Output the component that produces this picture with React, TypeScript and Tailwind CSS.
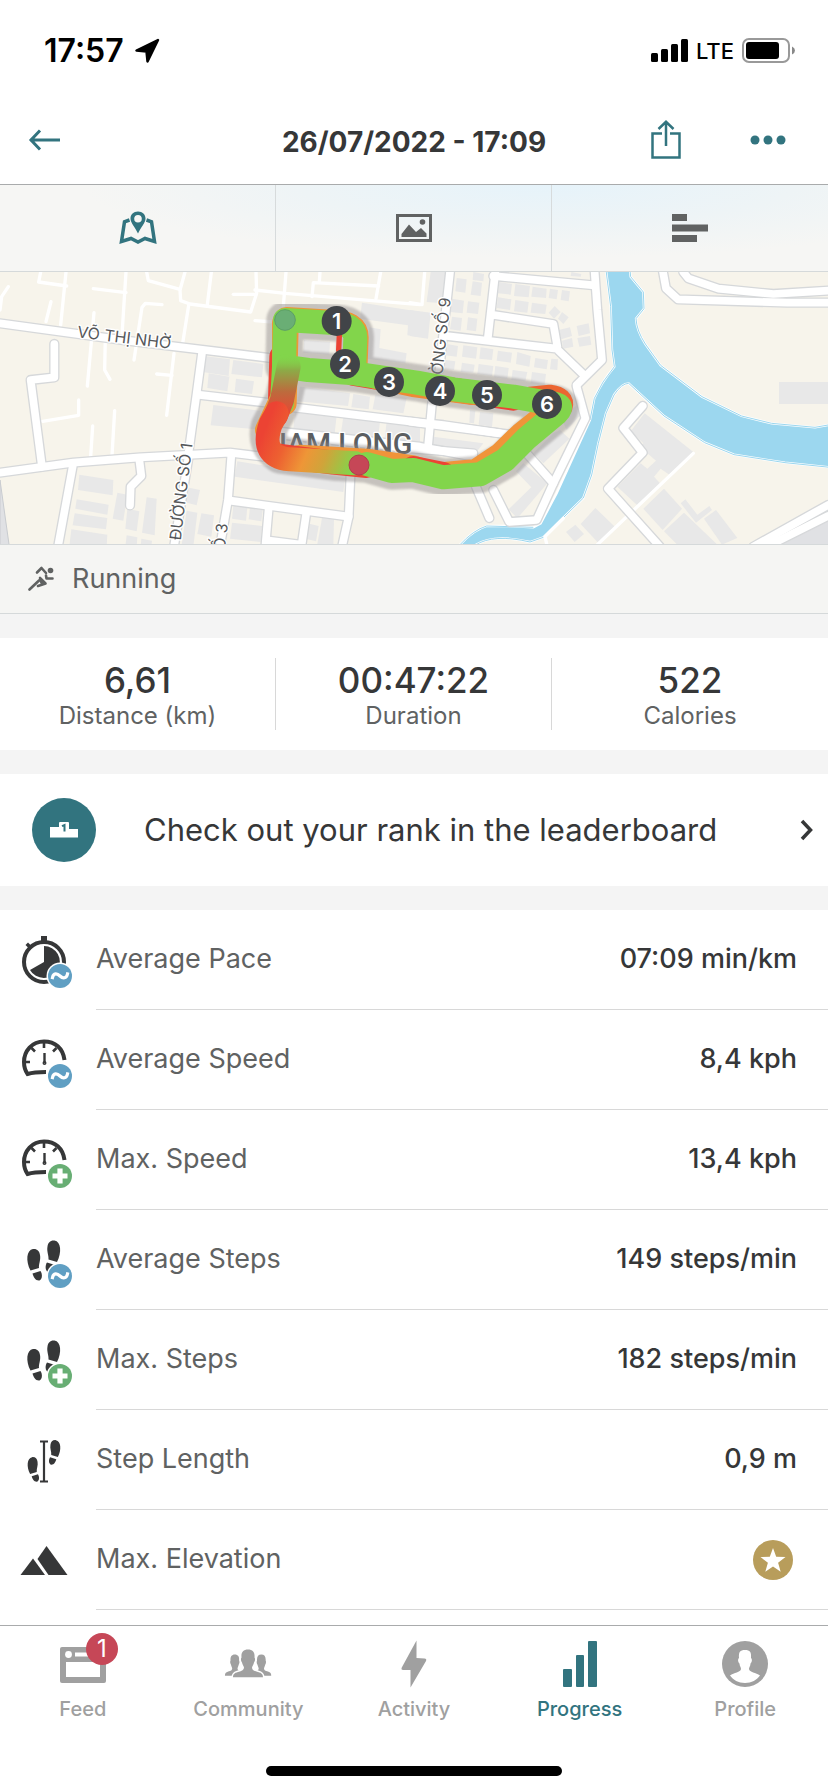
import type { ReactNode } from 'react';

interface Metric {
  label: string;
  value?: string;
  icon: ReactNode;
}

// ---------- MAP DATA (three units per pixel) ----------

const minorRoads = [
  'M25 50 L5 80 L0 120', 'M122 6 L116 36 L200 48', 'M198 6 L182 165', 'M153 95 L138 155',
  'M378 6 L366 195', 'M280 56 L378 68', 'M440 6 L445 32 L540 58', 'M555 6 L540 60 L542 92 L570 102 L752 126 L770 70 L768 6',
  'M634 6 L622 104', 'M700 73 L768 73', 'M566 106 L548 220', 'M765 60 L856 70 L1260 104', 'M858 6 L850 110',
  'M960 6 L958 36', 'M1142 6 L1128 86', 'M936 80 L940 38 L1136 48', 'M486 104 L436 100 L426 112 L402 270',
  'M282 128 L262 348', 'M316 200 L314 300 L330 328', 'M522 250 L500 436', 'M470 312 L516 316',
  'M236 390 L236 436 L128 454', 'M344 422 L336 556', 'M278 468 L272 560', 'M765 152 L820 156',
];

const roads = [
  'M0 160 L380 212 L820 265', 'M606 250 L590 370 L566 545', 'M592 374 L800 398', 'M880 412 L1260 458 L1330 465 L1500 490',
  'M163 222 L163 322 L92 330 L126 590', 'M0 608 L220 578 L420 562 L690 548 L790 560', 'M218 590 L174 830',
  'M418 570 L424 618 L392 650 L390 706', 'M566 560 L522 830', 'M694 556 L684 690 L660 830', 'M690 692 L1046 740',
  'M1054 560 L1046 740 L1026 830', 'M806 715 L796 830', 'M918 735 L904 830', 'M806 812 L900 824', 'M850 486 L1260 530 L1420 560',
];

const rightRoads = [
  'M120 6 L88 300', 'M256 6 L234 200', 'M250 18 L554 46', 'M554 6 L562 120 L576 270 L500 345',
  'M110 198 L440 236 L525 318', 'M246 134 L430 162 L442 230', 'M66 400 L54 530', 'M0 455 L310 495', 'M-380 495 L0 535 L190 550',
  'M500 350 L526 445 L430 640 L380 750 L298 756 L250 660', 'M198 650 L238 744', 'M350 550 L430 640',
  'M698 408 L640 474 L698 548 L594 656 L750 830', 'M758 0 L768 55 L804 88 L1130 98 L1254 98',
  'M820 6 L835 25 L925 56 L1090 72 L1254 62', 'M1030 830 L1254 705', 'M1070 830 L1254 738',
];

const buildings = [
  '612,258 690,268 686,318 608,306', '700,270 790,282 786,322 694,312', '626,310 688,320 682,364 622,354', '708,326 762,334 756,372 704,366',
  '640,405 780,422 790,480 632,466', '712,574 1036,624 1030,666 704,620', '238,614 340,630 338,676 234,660', '230,688 326,704 322,734 226,716',
  '224,730 322,744 318,778 218,766', '214,778 322,794 320,830 208,830', '352,668 382,674 370,752 338,746', '382,716 418,724 410,784 376,776',
  '440,682 470,686 464,796 426,788', '380,796 412,802 410,830 376,830', '424,806 456,812 454,830 422,830', '560,652 600,660 590,706 552,696',
  '560,722 592,728 580,830 544,830', '604,730 642,736 634,800 592,792', '700,706 742,712 738,752 696,746', '750,712 788,720 784,754 746,748',
  '696,758 786,768 782,816 690,806', '922,760 956,768 948,814 916,806', '966,744 1002,748 1000,826 952,822',
  '1086,98 1260,125 1260,202 1222,196 1224,166 1080,146', '1108,172 1142,178 1138,234 1220,250 1216,280 1100,266',
  '912,210 990,216 988,254 910,248', '900,350 1050,370 1044,408 892,394', '1060,372 1110,380 1106,418 1054,412',
  '1126,374 1220,384 1210,430 1118,418', '886,420 1010,436 1004,490 880,476', '1030,440 1140,454 1134,508 1022,496', '1160,456 1260,468 1260,520 1154,508',
];

const rightBuildings = [
  '62,6 108,6 98,100 50,96', '0,120 62,128 54,206 0,198', '140,24 170,28 166,68 136,64', '188,34 216,38 212,78 182,74', '190,6 222,12 220,34 188,30',
  '126,86 162,92 158,130 120,126', '174,94 208,98 204,132 170,128', '126,140 156,144 152,182 120,178', '174,142 202,146 198,184 170,180',
  '268,36 306,42 302,74 264,70', '316,42 360,48 356,82 312,78', '368,50 410,56 408,84 364,80', '420,56 444,60 440,88 416,84', '456,60 480,64 476,94 452,90',
  '264,82 304,88 300,120 260,114', '316,90 356,96 352,128 312,124', '366,98 410,104 406,132 362,128', '434,108 452,126 432,146 416,128', '456,126 476,142 460,162 444,146',
  '446,180 480,172 486,198 454,208', '500,168 536,160 540,190 506,198', '456,212 486,204 490,230 460,236', '502,204 540,198 544,224 508,230', '484,6 514,12 512,20 482,18',
  '110,222 144,228 140,260 106,256', '160,226 202,232 198,266 156,260', '212,232 250,238 246,270 208,266', '264,242 306,248 302,278 260,272', '322,246 362,258 358,290 318,282',
  '376,264 414,270 410,298 372,292', '424,266 444,268 442,300 420,298', '106,270 136,274 132,300 104,298', '156,278 194,284 190,308 152,306', '206,282 250,288 246,318 202,312',
  '256,288 296,294 292,326 252,322', '308,300 352,306 346,334 304,330', '366,306 408,312 404,344 362,340',
  '0,470 26,474 22,510 0,508', '70,500 220,520 200,545 66,532', '180,420 196,422 192,460 178,458', '210,426 250,430 246,470 206,464',
  '370,550 430,490 450,480 478,506 400,580', '318,604 340,580 412,640 322,745 296,718 364,652', '452,440 510,400 516,430 470,480',
  '704,430 850,546 778,614 752,596 732,620 750,640 682,706 622,650 692,580 712,596 738,572 690,530 700,520 662,484',
  '762,656 816,716 758,780 700,716', '822,728 920,822 800,822 762,784', '826,688 862,734 898,708 906,720 858,758 812,700',
  '918,720 982,804 936,824 882,746', '556,714 616,772 568,822 512,762', '496,764 522,792 494,816 468,786', '1107,336 1260,336 1260,402 1107,402',
];

const loop = 'M855 150 L990 158 Q1066 158 1066 205 L1062 305';
const outbound = 'M855 160 L852 290 L925 300 L1062 310 L1250 338 L1360 358 L1540 380 L1640 398';
const turn = 'M1640 398 Q1700 400 1670 430 L1580 505 L1515 570 L1440 613 L1330 622 L1240 600 L1175 603 L1100 582';
const home = 'M872 290 L850 390 L808 470 Q794 520 840 555 L1000 576 L1100 582';

const markers = [
  { n: 1, x: 1010, y: 153 },
  { n: 2, x: 1035, y: 282 },
  { n: 3, x: 1167, y: 336 },
  { n: 4, x: 1320, y: 363 },
  { n: 5, x: 1461, y: 375 },
  { n: 6, x: 1641, y: 402 },
];

function RouteMap() {
  return (
    <svg
      viewBox="0 6 2484 816"
      preserveAspectRatio="xMidYMid slice"
      role="img"
      aria-label="Route map"
      className="block w-full h-[272px] bg-[#f7f4eb] font-[Inter,sans-serif]"
    >
      <defs>
        <linearGradient id="fade" gradientUnits="userSpaceOnUse" x1="0" y1="255" x2="0" y2="440">
          <stop offset="0" stopColor="#82d54b" stopOpacity="0" />
          <stop offset="0.25" stopColor="#8daa47" />
          <stop offset="0.6" stopColor="#bd6a3d" />
          <stop offset="1" stopColor="#ec4333" />
        </linearGradient>
        <linearGradient id="heat" gradientUnits="userSpaceOnUse" x1="810" y1="440" x2="1075" y2="550">
          <stop offset="0" stopColor="#ec4333" />
          <stop offset="0.25" stopColor="#ed6131" />
          <stop offset="0.5" stopColor="#ee9637" />
          <stop offset="0.7" stopColor="#d0a43a" />
          <stop offset="1" stopColor="#82d54b" />
        </linearGradient>
        <filter id="soft" x="-10%" y="-10%" width="120%" height="120%">
          <feGaussianBlur stdDeviation="3" />
        </filter>
      </defs>

      <path d="M0 630 L28 830 L0 830z" fill="#e0e1e4" stroke="#c9ccd0" strokeWidth="3" />
      <g fill="#e8e8e8">
        {buildings.map(p => <polygon key={p} points={p} />)}
        <g transform="translate(1230 0)">
          {rightBuildings.map(p => <polygon key={p} points={p} />)}
          <path d="M1090 830 L1254 745 L1254 830z" fill="#e0e1e4" />
        </g>
      </g>

      {/* River */}
      <g transform="translate(1230 0)">
        <path
          d="M588 0 L602 110 L606 240 L613 290 Q575 335 553 385 L540 450 L440 670 L392 760 L370 772 L290 768 L230 768 Q190 780 148 826 L195 826 Q250 790 360 816 L400 802 L520 684 L545 615 L565 520 L588 430 L612 375 Q635 340 656 340 L762 438 L884 518 L972 554 L1125 578 L1260 592 L1260 464 L1215 472 L1085 460 L995 438 L876 380 L752 286 L706 222 Q680 182 678 146 L702 116 L700 66 L662 20 L660 0z"
          fill="#9cd7ef"
          stroke="#fff"
          strokeWidth="7"
        />
        <path
          d="M588 0 L602 110 L606 240 L613 290 Q575 335 553 385 L540 450 M148 826 Q190 780 230 768 L370 772 M195 826 Q250 790 360 816 L400 802 L520 684 L545 615 L565 520 L588 430 L612 375 Q635 340 656 340 L762 438 L884 518 L972 554 L1125 578 L1260 592 M1260 464 L1215 472 L1085 460 L995 438 L876 380 L752 286 L706 222 Q680 182 678 146 L702 116 L700 66 L662 20 L660 0"
          fill="none"
          stroke="#9cd7ef"
          strokeWidth="3"
        />
      </g>

      {/* Streets, drawn as a grey casing with a white core */}
      <g fill="none" strokeLinecap="round" strokeLinejoin="round">
        <g stroke="#fff" strokeWidth="10">
          {minorRoads.map(d => <path key={d} d={d} />)}
          <path d="M2080 550 L1790 826 M1642 830 L1635 800 L1690 745 M1230 98 L1266 104 L1274 6" />
        </g>
        <g stroke="#d6d8da" strokeWidth="31">
          {roads.map(d => <path key={d} d={d} />)}
          <g transform="translate(1230 0)">{rightRoads.map(d => <path key={d} d={d} />)}</g>
        </g>
        <g stroke="#fff" strokeWidth="23">
          {roads.map(d => <path key={d} d={d} />)}
          <g transform="translate(1230 0)">{rightRoads.map(d => <path key={d} d={d} />)}</g>
        </g>
      </g>

      {/* Street names */}
      <g fill="#55575a" stroke="#fff" strokeWidth="8" strokeLinejoin="round" paintOrder="stroke" fontSize="48">
        <text transform="translate(230 202) rotate(7)">VÕ THỊ NHỜ</text>
        <text transform="translate(542 812) rotate(-83)">ĐƯỜNG SỐ 1</text>
        <text transform="translate(684 762) rotate(-83)" textAnchor="end">SỐ 3</text>
        <text transform="translate(1352 84) rotate(-84)" textAnchor="end">ĐƯỜNG SỐ 9</text>
        <text x="1237" y="552" textAnchor="end" fontSize="86" fontWeight="500" fill="#5b5e61" className="font-[Roboto,sans-serif]">
          NAM LONG
        </text>
      </g>

      {/* Route */}
      <g fill="none" strokeLinecap="round" strokeLinejoin="round">
        <g stroke="#8b8686" strokeWidth="112" opacity="0.45" filter="url(#soft)">
          <path d={`${loop} ${outbound} ${turn} ${home}`} />
        </g>
        <g strokeWidth="72">
          <path d={loop} stroke="#ee9637" transform="translate(4 -3)" />
          <path d="M850 260 L846 390" stroke="#ec4333" transform="translate(-6 0)" />
          <path d="M852 160 L852 300" stroke="#ee9637" />
          <path d="M860 170 L854 400" stroke="#ee9637" />
          <path d="M1062 312 L1250 343 L1540 386" stroke="#ec4333" />
          <path d="M1130 322 L1240 345 L1420 369" stroke="#ee8a35" />
          <path d="M1590 386 L1650 380 Q1690 385 1682 410" stroke="#ec6631" />
          <path d="M1655 420 L1565 492 L1500 555 L1428 603 L1310 614 L1240 592 L1100 572 L900 560" stroke="#f0943a" />
          <path d="M1330 620 L1240 602" stroke="#ec4333" transform="translate(0 -8)" />
          <path d="M830 556 L1000 578 L1100 588" stroke="#ec4333" />
          <path d="M848 390 L806 480" stroke="#ee9637" transform="translate(-5 0)" />
        </g>
        <g stroke="#82d54b" strokeWidth="72">
          <path d={loop} />
          <path d={outbound} />
          <path d={turn} />
          <path d="M852 290 L846 400" />
        </g>
        <path d="M1018 196 L1016 240" stroke="#ec4333" strokeWidth="16" />
        <path d="M866 290 L846 390 L828 436" stroke="url(#fade)" strokeWidth="72" />
        <path d="M830 430 L812 462 Q778 560 870 568 L1065 580" stroke="url(#heat)" strokeWidth="72" />
      </g>

      <circle cx="855" cy="150" r="31" fill="#6aae75" stroke="#5c9d68" strokeWidth="3" />
      <circle cx="1077" cy="585" r="30" fill="#c64757" stroke="#b03e4c" strokeWidth="3" />
      {markers.map(m => (
        <g key={m.n}>
          <circle cx={m.x} cy={m.y} r="45" fill="#414448" />
          <text x={m.x} y={m.y + 24} textAnchor="middle" fontSize="66" fontWeight="600" fill="#fff">
            {m.n}
          </text>
        </g>
      ))}
    </svg>
  );
}

// ---------- METRIC ICONS ----------

function AvgBadge() {
  return (
    <g>
      <circle cx="38" cy="40" r="13.5" fill="#fff" />
      <circle cx="38" cy="40" r="12" fill="#609fc3" />
      <path d="M30.5 41.5 C31.5 37 35 37 38 40 C41 43 44.5 42.5 45.5 38" fill="none" stroke="#fff" strokeWidth="3.2" strokeLinecap="square" />
    </g>
  );
}

function MaxBadge() {
  return (
    <g>
      <circle cx="38" cy="40" r="13.5" fill="#fff" />
      <circle cx="38" cy="40" r="12" fill="#68ae74" />
      <path d="M38 32.5 V47.5 M30.5 40 H45.5" stroke="#fff" strokeWidth="5.2" />
    </g>
  );
}

function Stopwatch() {
  return (
    <g fill="#363738">
      <circle cx="22" cy="26" r="20" fill="none" stroke="#363738" strokeWidth="4" />
      <rect x="19" y="0" width="6" height="6" />
      <path d="M3.5 9 L6 6.5 L9.5 10 L7 12.5z" />
      <path d="M22 26 V10 A16 16 0 1 1 8 34z" />
    </g>
  );
}

function Gauge() {
  return (
    <g fill="none" stroke="#363738">
      <path d="M42.5 24 C41 12 33 5.5 22 5.5 C10 5.5 2 15 2 26 C2 31 3.5 35 5.5 38 C12 36 17 36 24 36" strokeWidth="4" />
      <path d="M22 6 V12 M9.5 12 L13 15.5 M34.5 12 L31 15.5 M3 26 H8" strokeWidth="2.6" />
      <path d="M22.5 17 V27" strokeWidth="2.4" />
      <circle cx="22.5" cy="27" r="1.2" strokeWidth="1.6" />
    </g>
  );
}

function Foot() {
  return (
    <g fill="#363738">
      <path d="M11 13 C4.5 14 3.5 25 8.5 34.5 L17 32 C16.5 28 19 24 18 19 C17.5 15 15 12.5 11 13z" />
      <path d="M10.500 37.5 L18.5 35 C20.5 38 20.5 43 17.5 44.5 C13.5 45 11.5 41 10.5 37.5z" />
    </g>
  );
}

function Steps() {
  return (
    <g>
      <Foot />
      <g transform="translate(43.5 -8.5) scale(-1 1)">
        <Foot />
      </g>
    </g>
  );
}

function StepLength() {
  return (
    <g>
      <g transform="translate(1.5 11) scale(0.78)">
        <Foot />
      </g>
      <g transform="translate(42.5 -6) scale(-0.78 0.78)">
        <Foot />
      </g>
      <path d="M18 5.500 H26 M22 5 V46 M18 45.500 H26" fill="none" stroke="#363738" strokeWidth="2.2" />
    </g>
  );
}

function Mountains() {
  return (
    <g fill="#363738">
      <path d="M-1.500 39 L11 22.500 L23 39z" />
      <path d="M15.500 23 L24.500 10 L45.500 39 H26.500z" />
    </g>
  );
}

const metrics: Metric[] = [
  { label: 'Average Pace', value: '07:09 min/km', icon: <><Stopwatch /><AvgBadge /></> },
  { label: 'Average Speed', value: '8,4 kph', icon: <><Gauge /><AvgBadge /></> },
  { label: 'Max. Speed', value: '13,4 kph', icon: <><Gauge /><MaxBadge /></> },
  { label: 'Average Steps', value: '149 steps/min', icon: <><Steps /><AvgBadge /></> },
  { label: 'Max. Steps', value: '182 steps/min', icon: <><Steps /><MaxBadge /></> },
  { label: 'Step Length', value: '0,9 m', icon: <StepLength /> },
  { label: 'Max. Elevation', icon: <Mountains /> },
];

const totals = [
  { value: '6,61', label: 'Distance (km)' },
  { value: '00:47:22', label: 'Duration' },
  { value: '522', label: 'Calories' },
];

const person = 'M24 0 C29 0 31 3 30.5 8 C31.5 9 31 12 30 13 C29.5 15 28.5 16.5 28 18 C28 20.5 30 21.5 34 22.5 C38 23.5 39 25 39 28 H9 C9 25 10 23.5 14 22.5 C18 21.5 20 20.5 20 18 C19.5 16.5 18.5 15 18 13 C17 12 16.5 9 17.5 8 C17 3 19 0 24 0z';

const navItems = [
  {
    label: 'Feed',
    badge: '1',
    icon: (
      <>
        <rect y="6" width="46" height="36" rx="2" />
        <g fill="#fff">
          <circle cx="8.5" cy="13.5" r="3.4" />
          <rect x="15" y="11.5" width="25" height="4" />
          <rect x="6" y="21" width="34" height="15" />
        </g>
      </>
    ),
  },
  {
    label: 'Community',
    icon: (
      <>
        <g transform="translate(-6 13.5) scale(0.66 0.76)"><path d={person} /></g>
        <g transform="translate(20.5 13.5) scale(0.66 0.76)"><path d={person} /></g>
        <path d={person} transform="translate(-1 8.5)" stroke="#fff" strokeWidth="3" paintOrder="stroke" />
        <rect x="-2" y="36.500" width="50" height="6" fill="#fff" />
      </>
    ),
  },
  {
    label: 'Activity',
    icon: <path d="M25.5 -0.5 L10.5 27 Q10 29 12 29 L19.5 29 L19.5 46.5 L35 20 Q36 17.5 33.5 17.5 L25.5 17z" />,
  },
  {
    label: 'Progress',
    active: true,
    icon: (
      <>
        <rect x="6" y="28" width="9" height="18" rx="1" />
        <rect x="19" y="14" width="8" height="32" rx="1" />
        <rect x="31" y="0" width="9" height="46" rx="1" />
      </>
    ),
  },
  {
    label: 'Profile',
    icon: (
      <>
        <circle cx="23" cy="23" r="23" />
        <path
          d="M23 9 C28 9 29.5 11 29 17 C30.5 18 30 21.5 28.5 22.5 C28.5 25 27 26 27 28 C27.5 31.5 34 31.5 38 34.5 C35 39 29.5 42 23 42 C16.5 42 11 39 8 34.5 C12 31.5 18.5 31.5 19 28 C19 26 17.5 25 17.5 22.5 C16 21.5 15.5 18 17 17 C16.5 11 18 9 23 9z"
          fill="#fff"
        />
      </>
    ),
  },
];

export default function App() {
  return (
    <div className="min-h-screen flex flex-col bg-[#f4f4f4] text-[#363738] font-[Inter,'Liberation_Sans',sans-serif]">
      {/* Status bar */}
      <div className="flex items-center justify-between bg-white text-black h-24 pl-11 pr-8 pt-1.5">
        <div className="flex items-center gap-2.5">
          <span className="text-[32px] leading-none font-semibold">17:57</span>
          <svg width="26" height="26" viewBox="0 0 26 26" aria-hidden="true">
            <path d="M24 2 L2.5 12.5 L12.5 13.5 L13.5 23.5z" stroke="#000" strokeWidth="2.5" strokeLinejoin="round" />
          </svg>
        </div>
        <div className="flex items-center gap-2">
          <svg width="37" height="24" viewBox="0 0 37 24" aria-hidden="true">
            <rect x="0" y="14" width="7" height="9" rx="1.5" />
            <rect x="10" y="10" width="7" height="13" rx="1.5" />
            <rect x="20" y="5" width="7" height="18" rx="1.5" />
            <rect x="30" y="0" width="7" height="23" rx="1.5" />
          </svg>
          <span className="text-[22px] leading-none font-medium">LTE</span>
          <svg width="54" height="26" viewBox="0 0 54 26" aria-hidden="true">
            <rect x="1" y="1" width="46" height="23" rx="6" fill="none" stroke="#999" strokeWidth="2" />
            <rect x="4" y="4" width="33" height="17" rx="3" />
            <path d="M50 8.5 Q53 10 53 12.5 Q53 15 50 16.5z" fill="#888" />
          </svg>
        </div>
      </div>

      {/* Header */}
      <header className="grid grid-cols-[1fr_auto_1fr] items-center bg-white border-b border-[#a9abac] h-[89px] px-7 text-[#32747f]">
        <button type="button" aria-label="Back" className="justify-self-start">
          <svg width="33" height="22" viewBox="0 0 33 22" fill="none" stroke="currentColor" strokeWidth="3">
            <path d="M2 11 H32 M12 1.5 L3 11 L12 20.5" />
          </svg>
        </button>
        <h1 className="pt-1 text-[28px] leading-none font-bold text-[#363738]">26/07/2022 - 17:09</h1>
        <div className="flex items-center justify-self-end gap-[68px] pr-3.5">
          <button type="button" aria-label="Share">
            <svg width="32" height="40" viewBox="0 0 32 40" fill="none" stroke="currentColor" strokeWidth="2.5">
              <path d="M12 13.5 H2.5 V37.5 H29.5 V13.5 H20" />
              <path d="M16 2 V26 M8.5 9 L16 1.8 L23.5 9" />
            </svg>
          </button>
          <button type="button" aria-label="More options">
            <svg width="36" height="10" viewBox="0 0 36 10" fill="currentColor">
              <circle cx="5" cy="5" r="4.5" />
              <circle cx="18" cy="5" r="4.5" />
              <circle cx="31" cy="5" r="4.5" />
            </svg>
          </button>
        </div>
      </header>

      {/* View switch */}
      <div className="grid grid-cols-3 divide-x divide-[#d7dbdc] border-b border-[#d5d9da] h-[87px] text-[#606262] bg-[radial-gradient(ellipse_at_66%_0%,#e6f3fa_0%,#eef4f6_32%,#f6f6f4_60%)]">
        <button type="button" aria-label="Map" className="flex items-center justify-center text-[#32747f]">
          <svg width="38" height="34" viewBox="0 0 38 34" fill="none" stroke="currentColor" strokeWidth="3.5">
            <path d="M10.5 9 L5.5 10.8 L2.5 30.5 L12 27.5 L19 31 L26 27.5 L35.5 30.5 L32.5 10.8 L27.5 9" />
            <path fillRule="evenodd" fill="currentColor" stroke="none" d="M19 0.5 C23.5 0.5 26.5 3.5 26.5 7.5 C26.5 12 22 16 19 22.5 C16 16 11.5 12 11.5 7.5 C11.5 3.5 14.5 0.5 19 0.5z M19 4 A3.8 3.8 0 1 0 19 11.6 A3.8 3.8 0 1 0 19 4z" />
          </svg>
        </button>
        <button type="button" aria-label="Photos" className="flex items-center justify-center">
          <svg width="36" height="28" viewBox="0 0 36 28" fill="currentColor">
            <rect x="1.5" y="1.5" width="33" height="25" fill="none" stroke="currentColor" strokeWidth="3" />
            <path d="M5.5 23 V20 L13 10.5 L20 18 L25 14 L30.5 19.5 V23z" />
            <circle cx="26.5" cy="8" r="2.8" />
          </svg>
        </button>
        <button type="button" aria-label="Splits" className="flex items-center justify-center">
          <svg width="36" height="28" viewBox="0 0 36 28" fill="currentColor">
            <rect width="15" height="7" />
            <rect y="10.5" width="36" height="7" />
            <rect y="21" width="25" height="7" />
          </svg>
        </button>
      </div>

      <RouteMap />

      {/* Activity type */}
      <div className="flex items-center gap-[18px] h-[70px] pl-7 border-y border-[#d5d9da] bg-[#f5f5f3] text-[27px] text-[#606262]">
        <svg width="26" height="26" viewBox="0 0 26 26" fill="none" stroke="currentColor" strokeWidth="2.6" strokeLinecap="round" strokeLinejoin="round" aria-hidden="true">
          <circle cx="22.5" cy="4.5" r="2.8" fill="currentColor" stroke="none" />
          <path d="M9 6.5 L13.5 2 L18 7" />
          <path d="M18 9.5 L18.5 12.5 L24.5 12.5" />
          <path d="M12 12 L17.5 17.5 L10 20" />
          <path d="M11 14.5 L1.5 23.5" />
          <path d="M12.500 14 L14 17" strokeWidth="3" />
        </svg>
        <span>Running</span>
      </div>

      {/* Totals */}
      <dl className="mt-6 py-5 grid grid-cols-3 divide-x divide-[#d8d8d8] bg-white text-center">
        {totals.map(t => (
          <div key={t.label} className="flex flex-col-reverse h-[72px]">
            <dt className="text-[24px] leading-7 text-[#606262]">{t.label}</dt>
            <dd className="text-[35px] leading-[44px] font-medium">{t.value}</dd>
          </div>
        ))}
      </dl>

      {/* Leaderboard link */}
      <a href="#leaderboard" className="mt-6 flex items-center h-28 pl-8 pr-3.5 bg-white">
        <span className="flex items-center justify-center size-16 rounded-full bg-[#32747f]">
          <svg width="28" height="16" viewBox="0 0 28 16" aria-hidden="true">
            <path d="M0 5 H9 V1 Q9 0 10 0 H18 Q19 0 19 1 V7 H28 V15.5 H0z" fill="#fff" />
            <path d="M12 4.2 L14.5 3 V9.5" fill="none" stroke="#32747f" strokeWidth="2" />
          </svg>
        </span>
        <span className="ml-12 flex-1 text-[31px]">Check out your rank in the leaderboard</span>
        <svg width="14" height="22" viewBox="0 0 14 22" fill="none" stroke="currentColor" strokeWidth="3.5" aria-hidden="true">
          <path d="M2 2 L10.5 11 L2 20" />
        </svg>
      </a>

      {/* Metrics */}
      <dl className="mt-6 flex-1 bg-white pb-[15px]">
        {metrics.map(m => (
          <div key={m.label} className="flex items-center">
            <svg width="52" height="54" viewBox="0 0 52 54" className="mx-[22px] mt-1.5 shrink-0 overflow-visible" aria-hidden="true">
              {m.icon}
            </svg>
            <div className="flex-1 flex items-center justify-between h-[100px] pr-[31px] border-b border-[#d8d8d8] text-[27px]">
              <dt className="text-[#606262]">{m.label}</dt>
              <dd className="font-medium">
                {m.value ?? (
                  <svg width="40" height="40" viewBox="0 0 40 40" role="img" aria-label="Premium" className="mr-1">
                    <circle cx="20" cy="20" r="20" fill="#b89d5b" />
                    <path d="M20 8 L23.2 16.8 L32.5 17.1 L25.1 22.7 L27.7 31.7 L20 26.5 L12.3 31.7 L14.9 22.7 L7.5 17.1 L16.8 16.8z" fill="#fff" />
                  </svg>
                )}
              </dd>
            </div>
          </div>
        ))}
      </dl>

      {/* Bottom navigation */}
      <footer className="bg-white border-t border-[#a9abac] pt-[15px] pb-4">
        <nav className="grid grid-cols-5">
          {navItems.map(item => (
            <a
              key={item.label}
              href={`#${item.label.toLowerCase()}`}
              className={`flex flex-col items-center gap-2 text-[20px] leading-7 font-medium ${item.active ? 'text-[#32747f]' : 'text-[#a0a0a0]'}`}
            >
              <span className="relative">
                <svg width="46" height="46" viewBox="0 0 46 46" fill="currentColor" className="block overflow-visible" aria-hidden="true">
                  {item.icon}
                </svg>
                {item.badge && (
                  <span className="absolute -top-2 -right-3 flex items-center justify-center size-8 rounded-full bg-[#c64757] text-white text-[24px] font-normal">
                    {item.badge}
                  </span>
                )}
              </span>
              {item.label}
            </a>
          ))}
        </nav>
        <div className="mx-auto mt-[43px] w-[296px] h-[10px] rounded-full bg-black" />
      </footer>
    </div>
  );
}
